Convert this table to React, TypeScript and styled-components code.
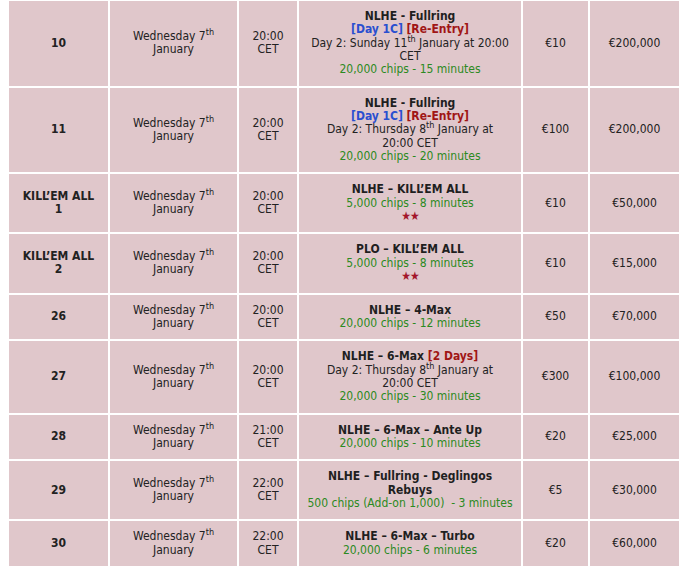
import React from "react";
import styled, { createGlobalStyle } from "styled-components";

const Global = createGlobalStyle`
  html, body { margin: 0; padding: 0; background: #ffffff; }
  body { font-family: "DejaVu Sans Condensed", "DejaVu Sans", Tahoma, sans-serif; }
`;

const Wrap = styled.div`
  padding: 0 0 0 7px;
  margin-top: -1px;
`;

const Table = styled.table`
  border-collapse: separate;
  border-spacing: 2px;
  background: #ffffff;
  table-layout: fixed;
  width: 674px;
`;

const Cell = styled.td<{ $bold?: boolean }>`
  background: #e0c7cb;
  color: #222222;
  font-size: 12px;
  line-height: 13.35px;
  text-align: center;
  vertical-align: middle;
  padding: 9px 4px;
  font-weight: ${(p) => (p.$bold ? 700 : 400)};
`;

const EventCell = styled(Cell)`
  padding-left: 8px;
  padding-right: 8px;
`;

const Title = styled.div`
  font-weight: 700;
  color: #1f1f1f;
`;

const Blue = styled.span`
  color: #2a4fd0;
  font-weight: 700;
`;

const Red = styled.span`
  color: #a01515;
  font-weight: 700;
`;

const Chips = styled.div`
  color: #2b8a22;
`;

const Stars = styled.div`
  color: #a3162a;
  font-size: 12px;
  line-height: 13.35px;
  letter-spacing: -1px;
`;

const Sup = styled.sup`
  font-size: 9px;
  line-height: 0;
  vertical-align: baseline;
  position: relative;
  top: -5px;
`;

type Row = {
  id: React.ReactNode;
  time: string;
  title: React.ReactNode;
  tags?: React.ReactNode;
  day2?: React.ReactNode;
  chips: string;
  stars?: boolean;
  buyin: string;
  gtd: string;
};

const tags = (
  <>
    <Blue>[Day 1C]</Blue> <Red>[Re-Entry]</Red>
  </>
);

const thursday = (
  <>
    Day 2: Thursday 8<Sup>th</Sup> January at
    <br />
    20:00 CET
  </>
);

const rows: Row[] = [
  {
    id: "10",
    time: "20:00",
    title: "NLHE - Fullring",
    tags,
    day2: (
      <>
        Day 2: Sunday 11<Sup>th</Sup> January at 20:00
        <br />
        CET
      </>
    ),
    chips: "20,000 chips - 15 minutes",
    buyin: "€10",
    gtd: "€200,000",
  },
  {
    id: "11",
    time: "20:00",
    title: "NLHE - Fullring",
    tags,
    day2: thursday,
    chips: "20,000 chips - 20 minutes",
    buyin: "€100",
    gtd: "€200,000",
  },
  {
    id: (
      <>
        KILL’EM ALL
        <br />1
      </>
    ),
    time: "20:00",
    title: "NLHE – KILL’EM ALL",
    chips: "5,000 chips - 8 minutes",
    stars: true,
    buyin: "€10",
    gtd: "€50,000",
  },
  {
    id: (
      <>
        KILL’EM ALL
        <br />2
      </>
    ),
    time: "20:00",
    title: "PLO – KILL’EM ALL",
    chips: "5,000 chips - 8 minutes",
    stars: true,
    buyin: "€10",
    gtd: "€15,000",
  },
  {
    id: "26",
    time: "20:00",
    title: "NLHE – 4-Max",
    chips: "20,000 chips - 12 minutes",
    buyin: "€50",
    gtd: "€70,000",
  },
  {
    id: "27",
    time: "20:00",
    title: (
      <>
        NLHE – 6-Max <Red>[2 Days]</Red>
      </>
    ),
    day2: thursday,
    chips: "20,000 chips - 30 minutes",
    buyin: "€300",
    gtd: "€100,000",
  },
  {
    id: "28",
    time: "21:00",
    title: "NLHE – 6-Max – Ante Up",
    chips: "20,000 chips - 10 minutes",
    buyin: "€20",
    gtd: "€25,000",
  },
  {
    id: "29",
    time: "22:00",
    title: (
      <>
        NLHE – Fullring - Deglingos
        <br />
        Rebuys
      </>
    ),
    chips: "500 chips (Add-on 1,000) \u00a0- 3 minutes",
    buyin: "€5",
    gtd: "€30,000",
  },
  {
    id: "30",
    time: "22:00",
    title: "NLHE – 6-Max – Turbo",
    chips: "20,000 chips - 6 minutes",
    buyin: "€20",
    gtd: "€60,000",
  },
];

export default function App() {
  return (
    <>
      <Global />
      <Wrap>
        <Table>
          <colgroup>
            <col style={{ width: 99 }} />
            <col style={{ width: 127 }} />
            <col style={{ width: 58 }} />
            <col style={{ width: 222 }} />
            <col style={{ width: 65 }} />
            <col style={{ width: 89 }} />
          </colgroup>
          <tbody>
            {rows.map((r, i) => (
              <tr key={i}>
                <Cell $bold>{r.id}</Cell>
                <Cell>
                  Wednesday 7<Sup>th</Sup>
                  <br />
                  January
                </Cell>
                <Cell>
                  {r.time}
                  <br />
                  CET
                </Cell>
                <EventCell>
                  <Title>{r.title}</Title>
                  {r.tags && <div>{r.tags}</div>}
                  {r.day2 && <div>{r.day2}</div>}
                  <Chips>{r.chips}</Chips>
                  {r.stars && <Stars>★★</Stars>}
                </EventCell>
                <Cell>{r.buyin}</Cell>
                <Cell>{r.gtd}</Cell>
              </tr>
            ))}
            <tr>
              <Cell>&nbsp;</Cell>
              <Cell>&nbsp;</Cell>
              <Cell>&nbsp;</Cell>
              <Cell>&nbsp;</Cell>
              <Cell>&nbsp;</Cell>
              <Cell>&nbsp;</Cell>
            </tr>
          </tbody>
        </Table>
      </Wrap>
    </>
  );
}
